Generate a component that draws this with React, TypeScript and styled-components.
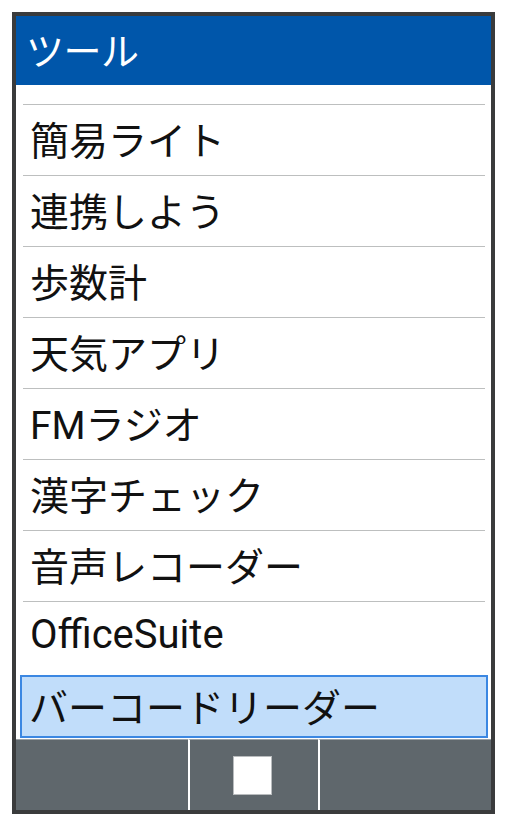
import React from "react";
import styled, { createGlobalStyle } from "styled-components";

const GlobalStyle = createGlobalStyle`
  html, body {
    margin: 0;
    padding: 0;
    background: #ffffff;
  }
  body {
    font-family: "Roboto", "Noto Sans CJK JP", sans-serif;
  }
`;

const Page = styled.div`
  width: 507px;
  height: 826px;
  padding: 12px;
  box-sizing: border-box;
`;

const Frame = styled.div`
  width: 483px;
  height: 802px;
  box-sizing: border-box;
  border: 4px solid #3a3b3c;
  display: flex;
  flex-direction: column;
  background: #ffffff;
`;

const Header = styled.div`
  height: 69px;
  flex: none;
  background: #0056aa;
  color: #ffffff;
  display: flex;
  align-items: center;
  padding: 0 0 4px 10px;
  box-sizing: border-box;
  font-size: 38px;
  letter-spacing: -0.5px;
`;

const List = styled.ul`
  list-style: none;
  margin: 0;
  padding: 19px 6px 0 7px;
  flex: 1;
  display: flex;
  flex-direction: column;
`;

const Item = styled.li<{ $selected?: boolean }>`
  box-sizing: border-box;
  display: flex;
  align-items: center;
  color: #111111;
  font-size: 39px;
  padding-bottom: 5px;
  ${({ $selected }) =>
    $selected
      ? `
    height: 63px;
    margin: 3px -3px 0 -3px;
    padding-left: 7px;
    padding-bottom: 3px;
    background: #c1ddfa;
    border: 2px solid #3b87e2;
  `
      : `
    height: 71px;
    padding-left: 7px;
    border-top: 1px solid #bdbfbf;
  `}
`;

const Latin = styled.span`
  font-size: 40px;
`;

const BottomBar = styled.div`
  height: 71px;
  flex: none;
  margin-top: 1px;
  background: #5f676c;
  display: grid;
  grid-template-columns: 172px 130px 1fr;
`;

const SoftKey = styled.div<{ $divider?: boolean }>`
  display: flex;
  align-items: center;
  justify-content: center;
  border-left: ${({ $divider }) => ($divider ? "2px solid #ffffff" : "none")};
  border-top: 1px solid #9aa0a4;
`;

const StopSquare = styled.div`
  width: 39px;
  height: 39px;
  box-sizing: border-box;
  background: #ffffff;
  border: 1px solid #b9bcbe;
  margin-right: 4px;
`;

const items = [
  "簡易ライト",
  "連携しよう",
  "歩数計",
  "天気アプリ",
  "FMラジオ",
  "漢字チェック",
  "音声レコーダー",
];

const App: React.FC = () => {
  return (
    <>
      <GlobalStyle />
      <Page>
        <Frame>
          <Header>ツール</Header>
          <List>
            {items.map((label) => (
              <Item key={label}>{label}</Item>
            ))}
            <Item>
              <Latin>OfficeSuite</Latin>
            </Item>
            <Item $selected>バーコードリーダー</Item>
          </List>
          <BottomBar>
            <SoftKey />
            <SoftKey $divider>
              <StopSquare />
            </SoftKey>
            <SoftKey $divider />
          </BottomBar>
        </Frame>
      </Page>
    </>
  );
};

export default App;
